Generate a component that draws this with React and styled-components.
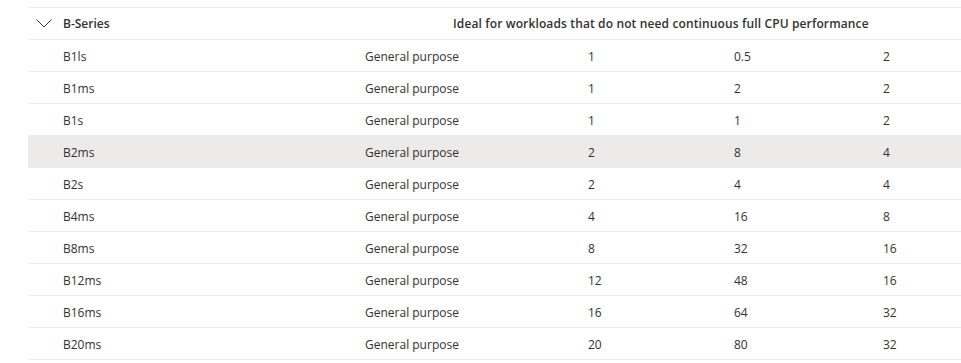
import React from "react";
import styled, { createGlobalStyle } from "styled-components";

const GlobalStyle = createGlobalStyle`
  html, body {
    margin: 0;
    padding: 0;
    background: #ffffff;
  }
  body {
    font-family: "Open Sans", "Liberation Sans", sans-serif;
    font-size: 12px;
    color: #323130;
  }
`;

const sizes = [
  { name: "B1ls", vcpu: 1, ram: "0.5", disks: 2 },
  { name: "B1ms", vcpu: 1, ram: "2", disks: 2 },
  { name: "B1s", vcpu: 1, ram: "1", disks: 2 },
  { name: "B2ms", vcpu: 2, ram: "8", disks: 4, selected: true },
  { name: "B2s", vcpu: 2, ram: "4", disks: 4 },
  { name: "B4ms", vcpu: 4, ram: "16", disks: 8 },
  { name: "B8ms", vcpu: 8, ram: "32", disks: 16 },
  { name: "B12ms", vcpu: 12, ram: "48", disks: 16 },
  { name: "B16ms", vcpu: 16, ram: "64", disks: 32 },
  { name: "B20ms", vcpu: 20, ram: "80", disks: 32 }
];

const App = () => {
  return (
    <>
      <GlobalStyle />
      <Wrapper>
        <Table>
          <GroupRow>
            <Toggle>
              <svg width="16" height="9" viewBox="0 0 16 9">
                <path
                  d="M0.5 0.5 L8 8 L15.5 0.5"
                  fill="none"
                  stroke="#323130"
                  strokeWidth="1"
                />
              </svg>
            </Toggle>
            <GroupName>B-Series</GroupName>
            <GroupDesc>
              Ideal for workloads that do not need continuous full CPU
              performance
            </GroupDesc>
          </GroupRow>
          {sizes.map((s) => (
            <Row key={s.name} $selected={s.selected}>
              <NameCell>{s.name}</NameCell>
              <Cell>General purpose</Cell>
              <Cell>{s.vcpu}</Cell>
              <Cell>{s.ram}</Cell>
              <Cell>{s.disks}</Cell>
            </Row>
          ))}
        </Table>
      </Wrapper>
    </>
  );
};

export default App;

// Styles:
const Wrapper = styled.div`
  padding: 7px 0 0 28px;
`;

const Table = styled.div`
  display: flex;
  flex-direction: column;
  border-top: 1px solid #edebe9;
`;

const GroupRow = styled.div`
  display: flex;
  align-items: center;
  height: 31px;
  border-bottom: 1px solid #edebe9;
  font-weight: 600;
`;

const Toggle = styled.div`
  width: 35px;
  display: flex;
  justify-content: center;
  svg {
    display: block;
    margin-left: -3px;
  }
`;

const GroupName = styled.div`
  width: 390px;
`;

const GroupDesc = styled.div`
  white-space: nowrap;
  letter-spacing: 0.13px;
`;

const Row = styled.div`
  display: grid;
  grid-template-columns: 337px 223px 146px 149px 1fr;
  align-items: center;
  height: 31px;
  padding-top: 1px;
  box-sizing: border-box;
  height: 32px;
  border-bottom: 1px solid #edebe9;
  background: ${(p) => (p.$selected ? "#edebe9" : "transparent")};
`;

const Cell = styled.div`
  white-space: nowrap;
`;

const NameCell = styled(Cell)`
  padding-left: 35px;
`;
